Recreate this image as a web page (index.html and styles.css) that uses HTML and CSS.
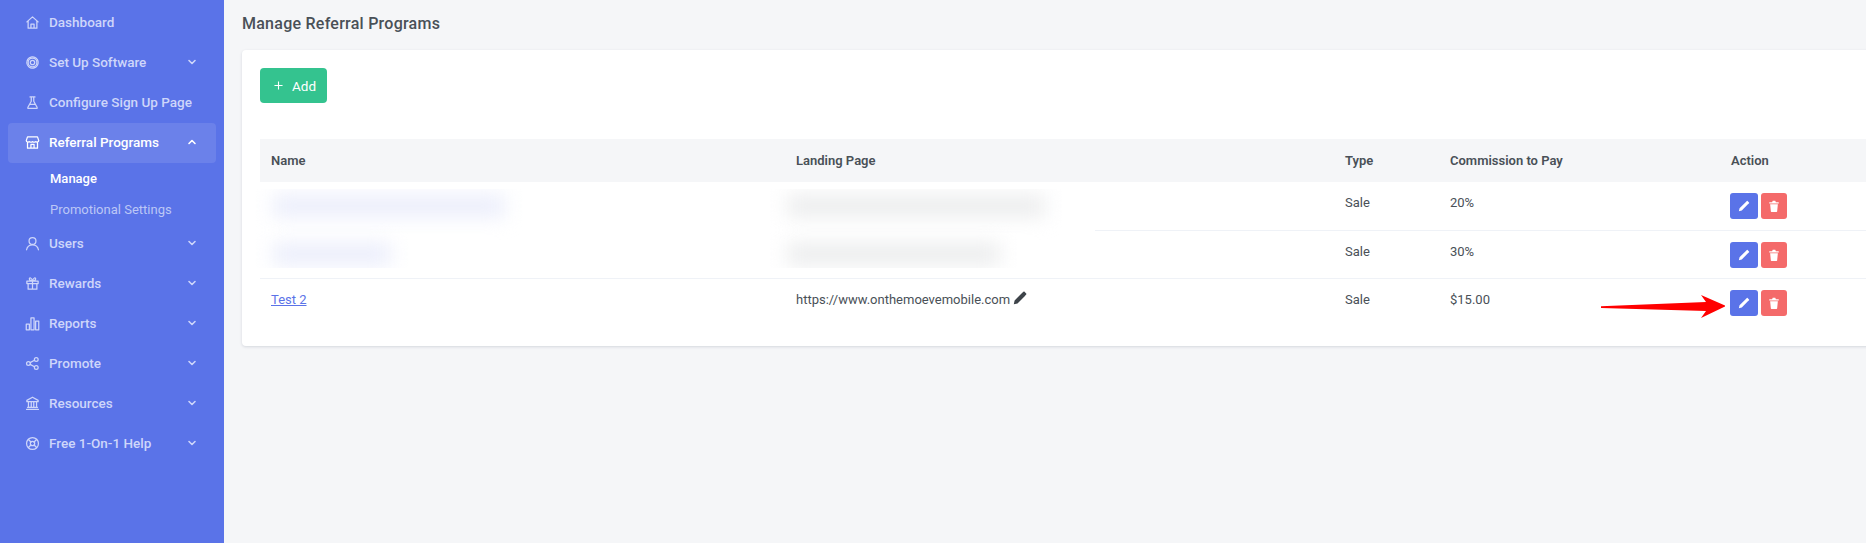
FILE: index.html
```html
<!DOCTYPE html>
<html lang="en">
<head>
<meta charset="utf-8">
<title>Manage Referral Programs</title>
<link rel="stylesheet" href="styles.css">
</head>
<body>
<div class="app">
  <aside class="sidebar">
    <a class="nav-item"><svg class="nav-icon" viewBox="0 0 24 24"><path d="M3 11l9-8 9 8M5 9.500V21h14V9.500M9.500 21v-6.500h5V21"/></svg><span class="nav-label">Dashboard</span></a>
    <a class="nav-item"><svg class="nav-icon" viewBox="0 0 24 24"><circle cx="12" cy="12" r="3.500"/><circle cx="12" cy="12" r="9" stroke-dasharray="4 1"/><circle cx="12" cy="12" r="7"/></svg><span class="nav-label">Set Up Software</span><svg class="chev" viewBox="0 0 10 10"><path d="M2 3.500l3 3 3-3"/></svg></a>
    <a class="nav-item"><svg class="nav-icon" viewBox="0 0 24 24"><path d="M8 3h8M10 3v7L4.500 20a1 1 0 0 0 1 1.500h13a1 1 0 0 0 1-1.500L14 10V3M7.500 15h9"/></svg><span class="nav-label">Configure Sign Up Page</span></a>
    <a class="nav-item active"><svg class="nav-icon" viewBox="0 0 24 24"><path d="M4 3h16l2 6a3 3 0 0 1-5 1.500A3.500 3.500 0 0 1 12 10.500 3.500 3.500 0 0 1 7 10.500 3 3 0 0 1 2 9zM4 12v9h16v-9M9.500 21v-6h5v6"/></svg><span class="nav-label">Referral Programs</span><svg class="chev" viewBox="0 0 10 10"><path d="M2 6.500l3-3 3 3"/></svg></a>
    <div class="subnav">
      <a class="sub-item current">Manage</a>
      <a class="sub-item">Promotional Settings</a>
    </div>
    <a class="nav-item"><svg class="nav-icon" viewBox="0 0 24 24"><circle cx="12" cy="8" r="5.500"/><path d="M2.500 22c1-5 4.500-8 9.500-8s8.500 3 9.500 8"/></svg><span class="nav-label">Users</span><svg class="chev" viewBox="0 0 10 10"><path d="M2 3.500l3 3 3-3"/></svg></a>
    <a class="nav-item"><svg class="nav-icon" viewBox="0 0 24 24"><path d="M3 8h18v4H3zM5 12v9h14v-9M12 8v13M12 8C9 8 7 6.500 7 4.500S10.500 2 12 8zM12 8c3 0 5-1.500 5-3.500S13.500 2 12 8z"/></svg><span class="nav-label">Rewards</span><svg class="chev" viewBox="0 0 10 10"><path d="M2 3.500l3 3 3-3"/></svg></a>
    <a class="nav-item"><svg class="nav-icon" viewBox="0 0 24 24"><path d="M2 13h5v9H2zM9.500 3h5v19h-5zM17 8h5v14h-5z"/></svg><span class="nav-label">Reports</span><svg class="chev" viewBox="0 0 10 10"><path d="M2 3.500l3 3 3-3"/></svg></a>
    <a class="nav-item"><svg class="nav-icon" viewBox="0 0 24 24"><circle cx="18" cy="5.500" r="3"/><circle cx="5.500" cy="12" r="3"/><circle cx="18" cy="18.500" r="3"/><path d="M8.200 10.600l7-3.700M8.200 13.400l7 3.700"/></svg><span class="nav-label">Promote</span><svg class="chev" viewBox="0 0 10 10"><path d="M2 3.500l3 3 3-3"/></svg></a>
    <a class="nav-item"><svg class="nav-icon" viewBox="0 0 24 24"><path d="M12 2L3 7v2h18V7zM5.500 9v9M10 9v9M14 9v9M18.500 9v9M4 18h16M2.500 21.500h19"/></svg><span class="nav-label">Resources</span><svg class="chev" viewBox="0 0 10 10"><path d="M2 3.500l3 3 3-3"/></svg></a>
    <a class="nav-item"><svg class="nav-icon" viewBox="0 0 24 24"><circle cx="12" cy="12" r="9.500"/><circle cx="12" cy="12" r="3.500"/><path d="M5.500 5.500l4 4M18.500 5.500l-4 4M5.500 18.500l4-4M18.500 18.500l-4-4"/></svg><span class="nav-label">Free 1-On-1 Help</span><svg class="chev" viewBox="0 0 10 10"><path d="M2 3.500l3 3 3-3"/></svg></a>
  </aside>
  <main class="main">
    <h1 class="page-title">Manage Referral Programs</h1>
    <section class="card">
      <button class="btn-add"><svg class="plus" viewBox="0 0 10 10"><path d="M5 .5v9M.5 5h9"/></svg>Add</button>
      <div class="table-wrap">
        <table class="table">
          <colgroup><col class="c-name"><col class="c-land"><col class="c-type"><col class="c-comm"><col class="c-act"></colgroup>
          <thead><tr><th>Name</th><th>Landing Page</th><th>Type</th><th>Commission to Pay</th><th>Action</th></tr></thead>
          <tbody>
            <tr><td></td><td></td><td>Sale</td><td>20%</td><td class="actions"><div class="action-group"><button class="btn-icon edit"><svg viewBox="0 0 14 14"><path d="M1 13l.8-3.400L9.500 1.900l2.600 2.600-7.700 7.700zM10.300 1.100l.6-.2 2.200 2.200-.2.600-.9.900-2.600-2.600z"/></svg></button><button class="btn-icon del"><svg viewBox="0 0 14 14"><path d="M1.500 2.500h3.300L5.500 1h3l.7 1.500h3.300v1.500h-11zM2.500 5h9l-.8 8.200a.8.800 0 0 1-.8.800H4.100a.8.800 0 0 1-.8-.8z"/></svg></button></div></td></tr>
            <tr><td></td><td></td><td>Sale</td><td>30%</td><td class="actions"><div class="action-group"><button class="btn-icon edit"><svg viewBox="0 0 14 14"><path d="M1 13l.8-3.400L9.500 1.900l2.600 2.600-7.700 7.700zM10.300 1.100l.6-.2 2.200 2.200-.2.600-.9.900-2.600-2.600z"/></svg></button><button class="btn-icon del"><svg viewBox="0 0 14 14"><path d="M1.500 2.500h3.300L5.500 1h3l.7 1.500h3.300v1.500h-11zM2.500 5h9l-.8 8.200a.8.800 0 0 1-.8.800H4.100a.8.800 0 0 1-.8-.8z"/></svg></button></div></td></tr>
            <tr><td><a class="link">Test 2</a></td><td class="url">https://www.onthemoevemobile.com <svg class="pencil" viewBox="0 0 14 14"><path d="M.8 13.200l.8-3.700L9.300 1.800l2.900 2.900-7.700 7.700zM10.200 1l.5-.4h.6l2.100 2.100v.6l-.4.500-1 1-2.900-2.900z"/></svg></td><td>Sale</td><td>$15.00</td><td class="actions"><div class="action-group"><button class="btn-icon edit"><svg viewBox="0 0 14 14"><path d="M1 13l.8-3.400L9.500 1.900l2.600 2.600-7.700 7.700zM10.300 1.100l.6-.2 2.200 2.200-.2.600-.9.900-2.600-2.600z"/></svg></button><button class="btn-icon del"><svg viewBox="0 0 14 14"><path d="M1.500 2.500h3.300L5.500 1h3l.7 1.500h3.300v1.500h-11zM2.500 5h9l-.8 8.200a.8.800 0 0 1-.8.800H4.100a.8.800 0 0 1-.8-.8z"/></svg></button></div></td></tr>
          </tbody>
        </table>
        <div class="redact"><span class="smear s1"></span><span class="smear s2"></span><span class="smear s3"></span><span class="smear s4"></span></div>
      </div>
    </section>
  </main>
  <svg class="arrow" viewBox="0 0 124 24"><path d="M0 11.200L105 7l-5-7 25 11-25 12 5-7L0 13z"/></svg>
</div>
</body>
</html>
```

FILE: styles.css
```css
* { box-sizing: border-box; }
html, body { margin: 0; height: 100%; }
body {
  font-family: "Roboto", "Noto Sans", "Liberation Sans", sans-serif;
  background: #f5f6f8;
  color: #495057;
  overflow: hidden;
}
.app { display: flex; height: 543px; position: relative; overflow: hidden; }

.sidebar {
  flex: 0 0 224px;
  min-width: 0;
  background: #5a73e8;
  padding: 3px 8px 0;
}
.nav-item {
  display: flex;
  align-items: center;
  height: 40px;
  padding: 0 19px 2px 17px;
  border-radius: 4px;
  color: #ced6fa;
  font-size: 13.500px;
  font-weight: 500;
}
.nav-item.active { background: #6b81ea; color: #fff; }
.nav-icon {
  flex: none;
  width: 15px;
  height: 15px;
  margin-right: 9px;
  fill: none;
  stroke: currentColor;
  stroke-width: 2;
  stroke-linejoin: round;
  stroke-linecap: round;
}
.nav-label { flex: 1; white-space: nowrap; }
.chev {
  flex: none;
  width: 10px;
  height: 10px;
  fill: none;
  stroke: currentColor;
  stroke-width: 1.600;
  stroke-linecap: round;
  stroke-linejoin: round;
}
.subnav { display: flex; flex-direction: column; height: 61px; padding-left: 42px; }
.sub-item {
  height: 30.500px;
  line-height: 31px;
  font-size: 13px;
  color: #bcc7f6;
  white-space: nowrap;
}
.sub-item.current { color: #fff; font-weight: 500; }

.main { flex: none; width: 1642px; padding: 0 0 0 18px; }
.page-title {
  margin: 0;
  height: 50px;
  line-height: 47px;
  font-size: 16px;
  font-weight: 500;
  letter-spacing: .25px;
  color: #495057;
}
.card {
  width: 1736px;
  height: 296px;
  padding: 18px;
  background: #fff;
  border-radius: 4px;
  box-shadow: 0 1px 3px rgba(18, 38, 63, .14);
}
.btn-add {
  display: flex;
  align-items: center;
  height: 35px;
  width: 67px;
  padding: 0 0 0 14px;
  border: 0;
  border-radius: 4px;
  background: #34c38f;
  color: #fff;
  font-family: inherit;
  font-size: 13.500px;
}
.plus {
  width: 9px;
  height: 9px;
  margin-right: 9px;
  fill: none;
  stroke: #fff;
  stroke-width: 1.200;
}
.table-wrap { position: relative; margin-top: 36px; }
.table { width: 1700px; border-collapse: collapse; table-layout: fixed; font-size: 13px; }
.c-name { width: 525px; }
.c-land { width: 549px; }
.c-type { width: 105px; }
.c-comm { width: 281px; }
.c-act { width: 240px; }
.table th {
  height: 43px;
  padding: 0 11px;
  background: #f5f6f8;
  text-align: left;
  font-weight: 600;
}
.table td {
  height: 48px;
  padding: 11px 11px 0;
  vertical-align: top;
  line-height: 19px;
  border-bottom: 1px solid #eff2f7;
}
.table tr:last-child td { border-bottom: 0; }
.table td.actions { padding-left: 10px; }
.action-group { display: flex; gap: 3px; }
.btn-icon {
  display: flex;
  align-items: center;
  justify-content: center;
  width: 28px;
  height: 26px;
  padding: 0;
  border: 0;
  border-radius: 3px;
}
.btn-icon svg { width: 12px; height: 12px; fill: #fff; }
.btn-icon.edit { background: #5a73e8; }
.btn-icon.del { width: 26px; background: #f46a6a; }
.link { color: #5b73e8; text-decoration: underline; }
.url { white-space: nowrap; }
.pencil { width: 14px; height: 14px; fill: #3d4349; vertical-align: -1px; }

.redact { position: absolute; top: 50px; left: -5px; width: 840px; height: 79px; overflow: hidden; background: #fff; }
.smear { position: absolute; display: block; height: 20px; filter: blur(10px); }
.s1, .s2 { background: #e9ecfb; }
.s3, .s4 { background: #eaebec; }
.s1 { left: 18px; top: 7px; width: 232px; }
.s2 { left: 18px; top: 55px; width: 118px; }
.s3 { left: 532px; top: 7px; width: 258px; }
.s4 { left: 532px; top: 55px; width: 213px; }

.arrow { position: absolute; left: 1601px; top: 295px; width: 124px; height: 24px; fill: #ff0000; }
```
